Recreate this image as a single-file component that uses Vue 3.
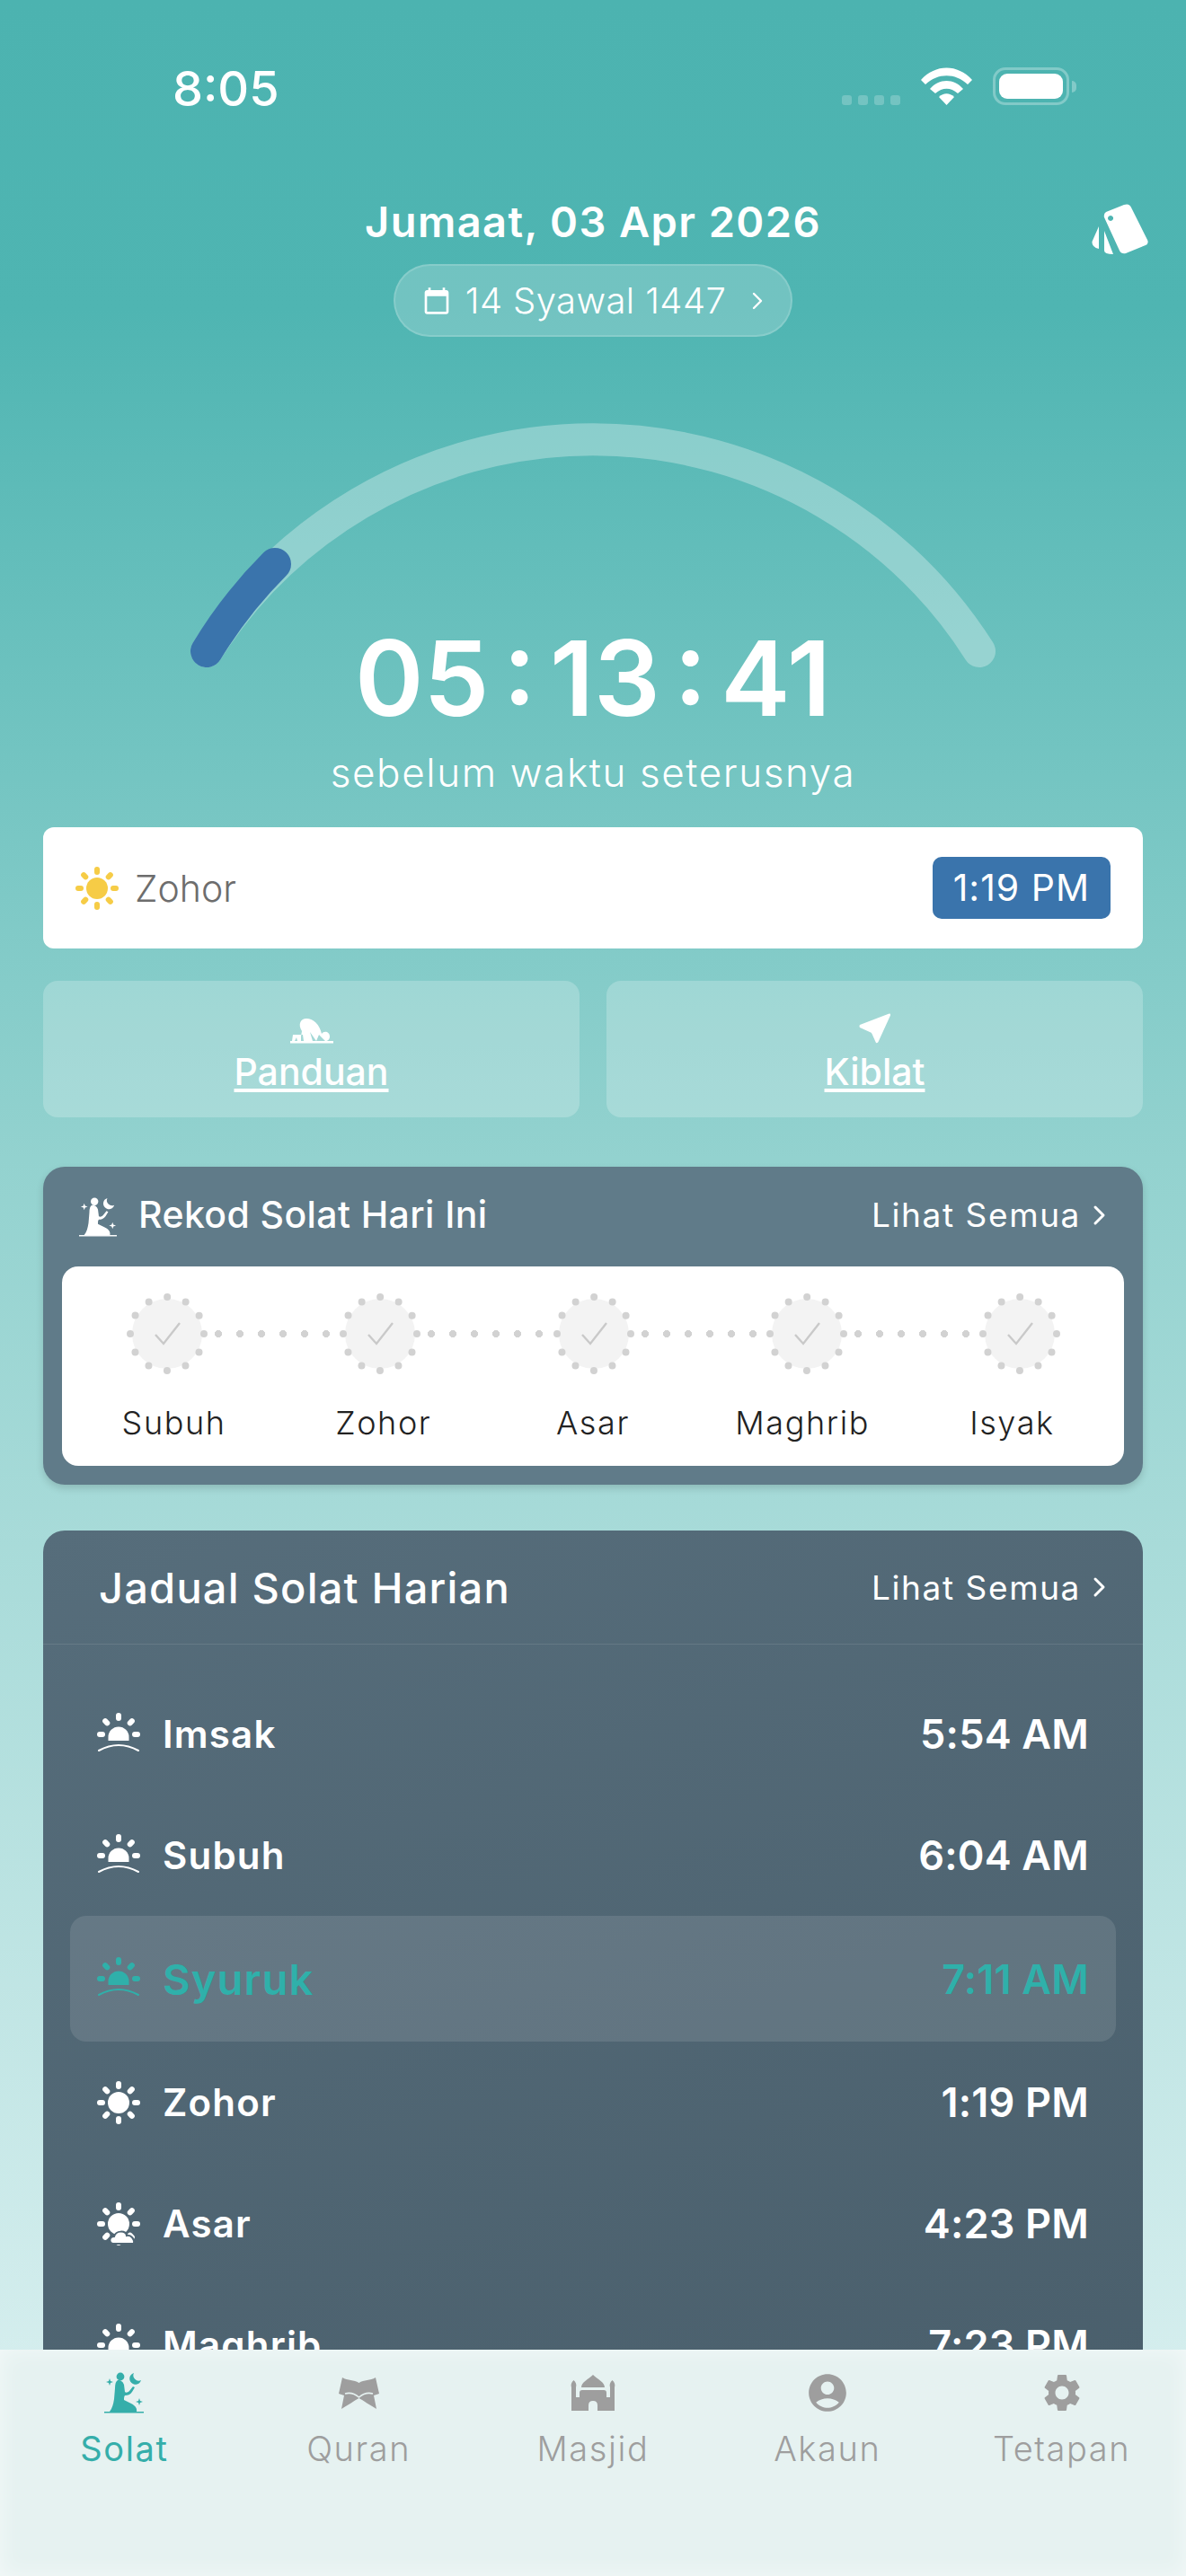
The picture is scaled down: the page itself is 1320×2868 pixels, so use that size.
<script setup>
const steps = ['Subuh', 'Zohor', 'Asar', 'Maghrib', 'Isyak']

const times = [
  { name: 'Imsak', time: '5:54 AM', icon: 'rise' },
  { name: 'Subuh', time: '6:04 AM', icon: 'rise' },
  { name: 'Syuruk', time: '7:11 AM', icon: 'rise', active: true },
  { name: 'Zohor', time: '1:19 PM', icon: 'sun' },
  { name: 'Asar', time: '4:23 PM', icon: 'cloud' },
  { name: 'Maghrib', time: '7:23 PM', icon: 'rise' }
]

const tabs = [
  { name: 'Solat', icon: 'pray', active: true },
  { name: 'Quran', icon: 'quran' },
  { name: 'Masjid', icon: 'mosque' },
  { name: 'Akaun', icon: 'user' },
  { name: 'Tetapan', icon: 'gear' }
]

const rays = [0, 45, 90, 135, 180, 225, 270, 315]
const upperRays = [-90, -45, 0, 45, 90]
</script>

<template>
  <div class="page">
    <header class="status">
      <span class="clock">8:05</span>
      <div class="status-icons">
        <div class="signal"><i></i><i></i><i></i><i></i></div>
        <svg width="57" height="42" viewBox="0 0 57 42" fill="#fff">
          <path d="M0 14 C16 -4 41 -4 57 14 L52 19 C38 6 19 6 5 19 Z" />
          <path d="M10 24 C20 12 37 12 47 24 L41 29 C33 22 24 22 16 29 Z" />
          <path d="M20 33 C25 28 32 28 37 33 L28.5 42 Z" />
        </svg>
        <div class="battery"><span></span></div>
        <div class="nub"></div>
      </div>
    </header>

    <section class="dateline">
      <div></div>
      <div class="date-center">
        <h1 class="date">Jumaat, 03 Apr 2026</h1>
        <div class="hijri">
          <svg width="32" height="32" viewBox="0 0 24 24" fill="#fff">
            <path d="M20 3h-1V1h-2v2H7V1H5v2H4c-1.1 0-2 .9-2 2v16c0 1.1.9 2 2 2h16c1.1 0 2-.9 2-2V5c0-1.1-.9-2-2-2zm0 18H4V8h16v13z" />
          </svg>
          <span>14 Syawal 1447</span>
          <svg class="hijri-arrow" width="14" height="22" viewBox="0 0 14 22" fill="none" stroke="#fff" stroke-width="2.4" stroke-linecap="round" stroke-linejoin="round">
            <path d="M3 3 L11 11 L3 19" />
          </svg>
        </div>
      </div>
      <svg class="cards" width="64" height="58" viewBox="0 0 64 58" fill="#fff">
        <path fill-rule="evenodd" d="M16 11 L36 3 Q42 1 44 6 L62 42 Q64 46 60 48 L38 57 Q33 58 31 54 L14 17 Q13 13 16 11 Z M21 15 a3 3 0 1 0 0.1 0 Z" />
        <path d="M8 27 L8 52 Q0 50 0.5 44 Z" />
        <path d="M14 32 L24 58 Q14 58 14 54 Z" />
      </svg>
    </section>

    <section class="gauge">
      <svg class="arc" width="1320" height="330" viewBox="0 440 1320 330" fill="none" stroke-width="36" stroke-linecap="round">
        <path d="M230 725 A510 510 0 0 1 1090 725" stroke="rgba(255,255,255,0.3)" />
        <path d="M230 725 A510 510 0 0 1 306 628" stroke="#3a74ac" />
      </svg>
      <div class="count">
        <div class="digits">05 : 13 : 41</div>
        <div class="caption">sebelum waktu seterusnya</div>
      </div>
    </section>

    <section class="next">
      <div class="next-name">
        <svg width="48" height="48" viewBox="0 0 48 48" fill="#f6cc46">
          <circle cx="24" cy="24" r="12" />
          <rect v-for="a in rays" :key="a" x="21" y="0" width="6" height="9" rx="3" :transform="`rotate(${a} 24 24)`" />
        </svg>
        <span>Zohor</span>
      </div>
      <span class="next-time">1:19 PM</span>
    </section>

    <section class="shortcuts">
      <a class="shortcut">
        <svg width="48" height="28" viewBox="0 0 48 28" fill="#fff">
          <path d="M13 14 C8 6 12 0 18 0 C26 0 33 7 35 17 C38 13 44 15 44 20 C44 23 42 25 39 25 L32 18 L29 25 L22 15 L25 25 L15 25 L14 18 L3 18 L2 25 L5 25 L7 21 L8 25 L12 25 L12 20 Z" />
          <rect x="0" y="25" width="48" height="2.5" />
        </svg>
        <span>Panduan</span>
      </a>
      <a class="shortcut">
        <svg width="36" height="34" viewBox="0 0 36 34" fill="#fff">
          <path d="M1 13 L33 .8 Q35.5 0 35 2.5 L21.5 32 Q19.5 34.5 18.5 32 L14.5 23 Q14 21.5 12 21 L1 16 Q0 14.5 1 13 Z" />
        </svg>
        <span>Kiblat</span>
      </a>
    </section>

    <section class="record">
      <div class="record-head">
        <div class="record-title">
          <svg width="42" height="46" viewBox="0 0 44 46" fill="#fff">
            <circle cx="18" cy="5" r="4.4" />
            <path d="M15 9 C13 10 12 13 12 18 L11 30 C10 36 9 40 6 44 L36 44 C37 40 34 37 30 35 L22 31 C22 29 22 27 23 26 C26 26 29 25 31 22 L34 17 L32 16 L28 21 C26 23 24 23 23 22 L22 14 C21 11 19 9 15 9 Z" />
            <path d="M33 1 A6.5 6.5 0 1 0 41 9 A6 6 0 0 1 33 1 Z" />
            <path d="M6 7 L7 10 L10 11 L7 12 L6 15 L5 12 L2 11 L5 10 Z M39 29 L40 32 L43 33 L40 34 L39 37 L38 34 L35 33 L38 32 Z" />
            <rect x="0" y="44" width="44" height="1.5" />
          </svg>
          <span>Rekod Solat Hari Ini</span>
        </div>
        <a class="see-all">
          Lihat Semua
          <svg width="16" height="26" viewBox="0 0 16 26" fill="none" stroke="#fff" stroke-width="3" stroke-linecap="round" stroke-linejoin="round"><path d="M3 4 L12 13 L3 22" /></svg>
        </a>
      </div>
      <div class="record-body">
        <div class="track">
          <template v-for="(s, i) in steps" :key="s">
            <svg width="90" height="90" viewBox="0 0 90 90" class="step">
              <circle cx="45" cy="45" r="39" fill="#f3f3f3" />
              <circle cx="45" cy="45" r="41" fill="none" stroke="#d2d2d2" stroke-width="8" stroke-linecap="round" stroke-dasharray="0 21.45" />
              <path d="M32 46 L41 56 L59 33" fill="none" stroke="#c9c9c9" stroke-width="2.4" />
            </svg>
            <div v-if="i < steps.length - 1" class="link"></div>
          </template>
        </div>
        <div class="step-names">
          <span v-for="s in steps" :key="s">{{ s }}</span>
        </div>
      </div>
    </section>

    <section class="schedule">
      <div class="schedule-head">
        <h2>Jadual Solat Harian</h2>
        <a class="see-all">
          Lihat Semua
          <svg width="16" height="26" viewBox="0 0 16 26" fill="none" stroke="#fff" stroke-width="3" stroke-linecap="round" stroke-linejoin="round"><path d="M3 4 L12 13 L3 22" /></svg>
        </a>
      </div>
      <div class="rows">
        <div v-for="t in times" :key="t.name" class="row" :class="{ active: t.active }">
          <div class="row-name">
            <svg width="48" height="48" viewBox="0 0 48 48" fill="currentColor">
              <template v-if="t.icon === 'rise'">
                <path d="M12.5 31 V27 a11.5 11.5 0 0 1 23 0 V31 Z" />
                <rect v-for="a in upperRays" :key="a" x="21" y="0" width="6" height="9" rx="3" :transform="`rotate(${a} 24 24)`" />
                <path d="M2 42 Q24 30 46 42" fill="none" stroke="currentColor" stroke-width="2" stroke-linecap="round" />
              </template>
              <template v-else>
                <circle cx="24" cy="24" r="12" />
                <rect v-for="a in rays" :key="a" x="21" y="0" width="6" height="9" rx="3" :transform="`rotate(${a} 24 24)`" />
                <path v-if="t.icon === 'cloud'" d="M18 46 C13 46 13 38 19 38 C21 31 32 31 33 37 C38 36 42 41 41 46 Z" stroke="#506674" stroke-width="2" />
              </template>
            </svg>
            <span>{{ t.name }}</span>
          </div>
          <span class="row-time">{{ t.time }}</span>
        </div>
      </div>
    </section>

    <nav class="tabs">
      <div v-for="tab in tabs" :key="tab.name" class="tab" :class="{ active: tab.active }">
        <div class="tab-icon">
          <svg v-if="tab.icon === 'pray'" width="44" height="46" viewBox="0 0 44 46" fill="currentColor">
            <circle cx="18" cy="5" r="4.4" />
            <path d="M15 9 C13 10 12 13 12 18 L11 30 C10 36 9 40 6 44 L36 44 C37 40 34 37 30 35 L22 31 C22 29 22 27 23 26 C26 26 29 25 31 22 L34 17 L32 16 L28 21 C26 23 24 23 23 22 L22 14 C21 11 19 9 15 9 Z" />
            <path d="M33 1 A6.5 6.5 0 1 0 41 9 A6 6 0 0 1 33 1 Z" />
            <path d="M6 7 L7 10 L10 11 L7 12 L6 15 L5 12 L2 11 L5 10 Z M39 29 L40 32 L43 33 L40 34 L39 37 L38 34 L35 33 L38 32 Z" />
            <rect x="0" y="44" width="44" height="1.5" />
          </svg>
          <svg v-else-if="tab.icon === 'quran'" width="45" height="36" viewBox="0 0 45 36" fill="currentColor">
            <path d="M4 1 C10 5 17 3 22.5 7 C28 3 35 5 41 1 L45 19 L39 21 L42 36 C35 32 28 27 22.5 24 C17 27 10 32 3 36 L6 21 L0 19 Z" />
            <path d="M7 19 C14 17 19 20 22.5 23 C26 20 31 17 38 19" fill="none" stroke="#e6f2f1" stroke-width="1.6" />
          </svg>
          <svg v-else-if="tab.icon === 'mosque'" width="50" height="40" viewBox="0 0 50 40" fill="currentColor">
            <path d="M12 14 C12 8 20 5 25 0 C30 5 38 8 38 14 Z" />
            <path d="M1 14 C0 11 1 8 3.5 6 C6 8 7 11 6 14 V25 H10 V20 Q10 17 13 17 H37 Q40 17 40 20 V25 H44 V14 C43 11 44 8 46.5 6 C49 8 50 11 49 14 V40 H30 V34 Q30 29 25 29 Q20 29 20 34 V40 H1 Z" />
          </svg>
          <svg v-else-if="tab.icon === 'user'" width="50" height="50" viewBox="0 0 24 24" fill="currentColor">
            <path d="M12 2C6.48 2 2 6.48 2 12s4.48 10 10 10 10-4.48 10-10S17.52 2 12 2zm0 4c1.93 0 3.5 1.57 3.5 3.5S13.93 13 12 13s-3.5-1.57-3.5-3.5S10.07 6 12 6zm0 14c-2.03 0-4.43-.82-6.14-2.88C7.55 15.8 9.68 15 12 15s4.45.8 6.14 2.12C16.43 19.18 14.03 20 12 20z" />
          </svg>
          <svg v-else width="50" height="50" viewBox="0 0 24 24" fill="currentColor">
            <path d="M19.14 12.94c.04-.3.06-.61.06-.94 0-.32-.02-.64-.07-.94l2.03-1.58c.18-.14.23-.41.12-.61l-1.92-3.32c-.12-.22-.37-.29-.59-.22l-2.39.96c-.5-.38-1.03-.7-1.62-.94l-.36-2.54c-.04-.24-.24-.41-.48-.41h-3.84c-.24 0-.43.17-.47.41l-.36 2.54c-.59.24-1.13.57-1.62.94l-2.39-.96c-.22-.08-.47 0-.59.22L2.74 8.87c-.12.21-.08.47.12.61l2.03 1.58c-.05.3-.09.63-.09.94s.02.64.07.94l-2.03 1.58c-.18.14-.23.41-.12.61l1.92 3.32c.12.22.37.29.59.22l2.39-.96c.5.38 1.03.7 1.62.94l.36 2.54c.05.24.24.41.48.41h3.84c.24 0 .44-.17.47-.41l.36-2.54c.59-.24 1.13-.56 1.62-.94l2.39.96c.22.08.47 0 .59-.22l1.92-3.32c.12-.22.07-.47-.12-.61l-2.01-1.58zM12 15.6c-1.98 0-3.6-1.62-3.6-3.6s1.62-3.6 3.6-3.6 3.6 1.62 3.6 3.6-1.62 3.6-3.6 3.6z" />
          </svg>
        </div>
        <span>{{ tab.name }}</span>
      </div>
    </nav>
  </div>
</template>

<style scoped>
.page {
  position: relative;
  width: 1320px;
  height: 2868px;
  overflow: hidden;
  background: linear-gradient(180deg, #4cb3b0 0%, #4fb5b2 12%, #93d2cf 45%, #d5eeee 92%);
  font-family: Inter, "Open Sans", sans-serif;
  color: #fff;
}

/* status bar */
.status {
  display: flex;
  justify-content: space-between;
  align-items: center;
  height: 42px;
  padding: 75px 122px 0 192px;
}
.clock {
  margin-top: 5px;
  font-size: 54px;
  font-weight: 500;
  line-height: 42px;
}
.status-icons {
  display: flex;
  align-items: flex-end;
}
.signal {
  display: flex;
  gap: 7px;
  margin-right: 23px;
}
.signal i {
  width: 11px;
  height: 11px;
  border-radius: 3px;
  background: rgba(255, 255, 255, 0.22);
}
.battery {
  box-sizing: border-box;
  width: 85px;
  height: 42px;
  margin-left: 23px;
  padding: 4px;
  border: 3px solid rgba(255, 255, 255, 0.3);
  border-radius: 14px;
}
.battery span {
  display: block;
  height: 100%;
  border-radius: 9px;
  background: #fff;
}
.nub {
  width: 5px;
  height: 13px;
  margin: 0 0 14px 3px;
  border-radius: 0 5px 5px 0;
  background: rgba(255, 255, 255, 0.3);
}

/* date */
.dateline {
  display: grid;
  grid-template-columns: 1fr auto 1fr;
  margin-top: 105px;
  padding: 0 41px;
}
.date-center {
  display: flex;
  flex-direction: column;
  align-items: center;
}
.date {
  margin: 0;
  font-size: 47px;
  line-height: 50px;
  font-weight: 600;
  letter-spacing: 1.4px;
}
.cards {
  justify-self: end;
  margin-top: 3px;
}
.hijri {
  box-sizing: border-box;
  display: flex;
  align-items: center;
  gap: 16px;
  height: 81px;
  margin-top: 22px;
  padding: 0 30px;
  border: 2px solid rgba(255, 255, 255, 0.15);
  border-radius: 41px;
  background: rgba(255, 255, 255, 0.2);
  font-size: 40px;
  font-weight: 300;
  letter-spacing: 0.4px;
}
.hijri-arrow {
  margin-left: 12px;
}

/* countdown */
.gauge {
  display: grid;
  height: 546px;
}
.arc,
.count {
  grid-area: 1 / 1;
}
.arc {
  margin-top: 65px;
}
.count {
  display: flex;
  flex-direction: column;
  align-items: center;
  padding-top: 320px;
}
.digits {
  font-size: 116px;
  line-height: 120px;
  font-weight: 600;
  word-spacing: -14px;
}
.caption {
  margin-top: 18px;
  font-size: 44px;
  line-height: 54px;
  font-weight: 300;
  letter-spacing: 1.6px;
}

/* next prayer */
.next {
  display: flex;
  justify-content: space-between;
  align-items: center;
  height: 135px;
  margin: 0 48px;
  padding: 0 36px;
  border-radius: 12px;
  background: #fff;
}
.next-name {
  display: flex;
  align-items: center;
  gap: 18px;
  color: #6d6d6d;
  font-size: 41px;
  font-weight: 300;
}
.next-time {
  padding: 8px 23px;
  border-radius: 10px;
  background: #3a74ac;
  color: #fff;
  font-size: 41px;
  line-height: 53px;
  letter-spacing: 1px;
}

.shortcuts {
  display: grid;
  grid-template-columns: 1fr 1fr;
  gap: 30px;
  margin: 36px 48px 0;
}
.shortcut {
  display: flex;
  flex-direction: column;
  align-items: center;
  justify-content: flex-end;
  gap: 8px;
  height: 152px;
  padding-bottom: 28px;
  box-sizing: border-box;
  border-radius: 16px;
  background: rgba(255, 255, 255, 0.22);
  font-size: 41px;
  line-height: 46px;
  font-weight: 500;
  text-decoration: underline;
  text-underline-offset: 4px;
}

/* record card */
.record {
  margin: 55px 48px 0;
  padding-bottom: 21px;
  border-radius: 24px;
  background: #607b89;
  box-shadow: 0 4px 8px rgba(0, 0, 0, 0.15);
}
.record-head {
  display: flex;
  justify-content: space-between;
  align-items: center;
  height: 111px;
  padding: 0 40px 0 40px;
}
.record-title {
  display: flex;
  align-items: center;
  gap: 24px;
  font-size: 41px;
  font-weight: 500;
  letter-spacing: 0.4px;
}
.record-title span {
  margin-top: -5px;
}
.see-all {
  display: flex;
  align-items: center;
  gap: 13px;
  font-size: 37px;
  letter-spacing: 1.6px;
}
.record .see-all {
  margin-top: -4px;
}
.record-body {
  margin: 0 21px;
  height: 222px;
  border-radius: 18px;
  background: #fff;
}
.track {
  display: flex;
  align-items: center;
  padding: 30px 71px 0 72px;
}
.step {
  flex: none;
}
.link {
  flex: 1;
  height: 8px;
  background: radial-gradient(circle, #d2d2d2 3.8px, transparent 4.2px) 0 0 / 24px 8px repeat-x;
}
.step-names {
  display: grid;
  grid-template-columns: repeat(5, 1fr);
  margin-top: 31px;
  padding: 0 8px;
  color: #222;
  font-size: 36px;
  line-height: 46px;
  letter-spacing: 1.6px;
  text-align: center;
  font-weight: 300;
}

/* schedule card */
.schedule {
  margin: 51px 48px 0;
  border-radius: 24px;
  background: linear-gradient(160deg, #566d7b 0%, #4a5f6c 100%);
}
.schedule-head {
  display: flex;
  justify-content: space-between;
  align-items: center;
  height: 126px;
  padding: 0 40px 0 62px;
  border-bottom: 1px solid rgba(255, 255, 255, 0.1);
}
.schedule-head h2 {
  margin: 0;
  font-size: 47px;
  font-weight: 500;
  letter-spacing: 1.2px;
}
.rows {
  padding: 32px 30px 0;
}
.row {
  display: flex;
  justify-content: space-between;
  align-items: center;
  height: 135px;
  padding: 0 30px;
  border-radius: 18px;
  color: #fff;
  font-size: 42px;
  font-weight: 600;
  letter-spacing: 1.2px;
}
.row-name {
  display: flex;
  align-items: center;
  gap: 25px;
}
.row-time {
  font-size: 45px;
  letter-spacing: 0.2px;
}
.row.active {
  height: 140px;
  background: rgba(255, 255, 255, 0.11);
  color: #2fb0aa;
  font-size: 47px;
}

/* bottom tabs */
.tabs {
  position: absolute;
  left: 0;
  right: 0;
  bottom: 0;
  display: grid;
  grid-template-columns: repeat(5, 1fr);
  height: 252px;
  padding: 23px 8px 0;
  box-sizing: border-box;
  background: #e6f2f1;
  box-shadow: inset 0 0 24px rgba(255, 255, 255, 0.55);
}
.tab {
  display: flex;
  flex-direction: column;
  align-items: center;
  color: #9e9e9e;
  font-size: 38px;
  font-weight: 300;
  letter-spacing: 1.6px;
}
.tab.active {
  color: #35aeaa;
  font-weight: 400;
}
.tab-icon {
  display: flex;
  align-items: center;
  justify-content: center;
  height: 50px;
  margin-bottom: 14px;
}
</style>
